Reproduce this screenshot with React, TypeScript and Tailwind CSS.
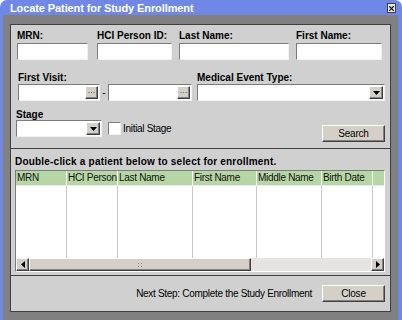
const sunken = "border border-t-[#7b7b7b] border-l-[#7b7b7b] border-b-[#f2f2f2] border-r-[#f2f2f2] bg-white"
const raised =
  "border border-t-white border-l-white border-b-[#404040] border-r-[#404040] bg-[#d4d0c8] shadow-[inset_-1px_-1px_0_#808080]"

const columns = [
  { label: "MRN", w: 51 },
  { label: "HCI Person", w: 51 },
  { label: "Last Name", w: 75 },
  { label: "First Name", w: 64 },
  { label: "Middle Name", w: 65 },
  { label: "Birth Date", w: 51 },
]

function Label({ children, className = "" }: { children: string; className?: string }) {
  return <div className={`h-[12px] text-[10px] font-bold leading-[12px] text-black ${className}`}>{children}</div>
}

function DotsButton() {
  return (
    <div className={`flex h-[13px] w-[13px] items-start justify-center text-[8px] leading-[8px] ${raised}`}>…</div>
  )
}

function DropButton() {
  return (
    <div className={`flex h-[13px] w-[14px] items-center justify-center ${raised}`}>
      <svg width="7" height="4" viewBox="0 0 7 4">
        <path d="M0 0h7L3.5 4z" fill="#000" />
      </svg>
    </div>
  )
}

function DateField({ w }: { w: number }) {
  return (
    <div className={`flex h-[17px] items-center justify-end pr-[1px] ${sunken}`} style={{ width: w }}>
      <DotsButton />
    </div>
  )
}

function Select({ w }: { w: number }) {
  return (
    <div className={`flex h-[17px] items-center justify-end pr-[1px] ${sunken}`} style={{ width: w }}>
      <DropButton />
    </div>
  )
}

function Arrow({ dir }: { dir: "l" | "r" }) {
  return (
    <div className={`flex h-[13px] w-[13px] shrink-0 items-center justify-center ${raised}`}>
      <svg width="4" height="7" viewBox="0 0 4 7">
        <path d={dir === "l" ? "M4 0v7L0 3.5z" : "M0 0v7l4-3.5z"} fill="#000" />
      </svg>
    </div>
  )
}

export default function App() {
  return (
    <div className="flex h-[320px] w-[402px] flex-col overflow-hidden rounded-t-[7px] bg-[#6f87e6] font-['Liberation_Sans',Arial,sans-serif]">
      {/* title bar */}
      <div className="flex h-[15px] shrink-0 items-center justify-between pl-[10px] pr-[6px] pt-[1px]">
        <span className="text-[11px] font-bold leading-[14px] tracking-[-0.1px] text-white">
          Locate Patient for Study Enrollment
        </span>
        <div className="flex h-[10px] w-[9px] items-center justify-center border border-[#404040] bg-[#e4e4e4]">
          <svg width="5" height="5" viewBox="0 0 5 5">
            <path d="M0 0L5 5M5 0L0 5" stroke="#000" strokeWidth="1.2" />
          </svg>
        </div>
      </div>

      <div className="flex flex-1 pl-[3px] pr-[5px]">
        <div className="flex flex-1 bg-[#808080] pb-[8px] pl-[7px] pr-[7px] pt-[9px]">
          <div className="flex flex-1 flex-col border border-[#404040] bg-[#d0d0d0] text-black">
            {/* search form */}
            <div className="flex h-[124px] shrink-0 flex-col border-b border-[#404040] pl-[6px] pr-[5px] pt-[5px]">
              <div className="flex">
                <div className="w-[71px]">
                  <Label className="mb-[1px]">MRN:</Label>
                  <div className={`h-[17px] ${sunken}`} />
                </div>
                <div className="ml-[9px] w-[75px]">
                  <Label className="mb-[1px]">HCI Person ID:</Label>
                  <div className={`h-[17px] ${sunken}`} />
                </div>
                <div className="ml-[7px] w-[110px]">
                  <Label className="mb-[1px]">Last Name:</Label>
                  <div className={`h-[17px] ${sunken}`} />
                </div>
                <div className="ml-[7px] w-[86px]">
                  <Label className="mb-[1px]">First Name:</Label>
                  <div className={`h-[17px] ${sunken}`} />
                </div>
              </div>

              <div className="mt-[12px] flex">
                <div className="ml-[1px]">
                  <Label>First Visit:</Label>
                  <div className="flex items-center">
                    <DateField w={82} />
                    <span className="w-[8px] text-center text-[10px] leading-[12px]">-</span>
                    <DateField w={84} />
                  </div>
                </div>
                <div className="ml-[5px]">
                  <Label>Medical Event Type:</Label>
                  <Select w={188} />
                </div>
              </div>

              <div className="mt-[8px] flex items-start">
                <div className="-ml-[1px]">
                  <div className="h-[11px] text-[10px] font-bold leading-[11px]">Stage</div>
                  <Select w={86} />
                </div>
                <div className="ml-[6px] mt-[13px] flex items-center">
                  <div className={`h-[13px] w-[13px] ${sunken}`} />
                  <span className="ml-[2px] text-[10px] leading-[12px] tracking-[-0.3px]">Initial Stage</span>
                </div>
                <div className="flex-1" />
                <div className={`mt-[16px] flex h-[17px] w-[63px] items-center justify-center text-[10px] tracking-[-0.2px] ${raised}`}>
                  Search
                </div>
              </div>
            </div>

            {/* results */}
            <div className="flex h-[127px] shrink-0 flex-col border-b border-[#404040] pl-[4px] pr-[5px] pt-[7px]">
              <Label className="mb-[2px] tracking-[0.2px]">Double-click a patient below to select for enrollment.</Label>
              <div className="flex h-[102px] flex-col border border-b-white border-l-[#7b7b7b] border-r-white border-t-[#7b7b7b]">
                <div className="flex h-[15px] shrink-0 bg-[#b7d6a6]">
                  {columns.map((c) => (
                    <div
                      key={c.label}
                      className="shrink-0 overflow-hidden whitespace-nowrap border-b border-r border-b-[#e8f0e0] border-r-white pl-[1px] text-[10px] leading-[14px] tracking-[-0.3px] text-[#111]"
                      style={{ width: c.w }}
                    >
                      {c.label}
                    </div>
                  ))}
                  <div className="flex-1 border-b border-[#e8f0e0]" />
                </div>
                <div className="flex flex-1 bg-white">
                  {columns.map((c) => (
                    <div key={c.label} className="shrink-0 border-r border-[#c8c8c8]" style={{ width: c.w }} />
                  ))}
                </div>
                <div className="flex h-[13px] shrink-0 bg-[#e6e4e0]">
                  <Arrow dir="l" />
                  <div className={`flex h-[13px] w-[222px] items-center justify-center ${raised}`}>
                    <svg width="4" height="4" viewBox="0 0 4 4">
                      <rect x="0" y="0" width="1" height="1" fill="#808080" />
                      <rect x="3" y="0" width="1" height="1" fill="#808080" />
                      <rect x="0" y="3" width="1" height="1" fill="#808080" />
                      <rect x="3" y="3" width="1" height="1" fill="#808080" />
                    </svg>
                  </div>
                  <div className="flex-1" />
                  <Arrow dir="r" />
                </div>
              </div>
            </div>

            {/* footer */}
            <div className="flex flex-1 items-center justify-end pr-[5px]">
              <span className="text-[10px] leading-[12px] tracking-[-0.3px]">Next Step: Complete the Study Enrollment</span>
              <div className={`ml-[10px] flex h-[17px] w-[63px] items-center justify-center text-[10px] tracking-[-0.2px] ${raised}`}>
                Close
              </div>
            </div>
          </div>
        </div>
      </div>
    </div>
  )
}
